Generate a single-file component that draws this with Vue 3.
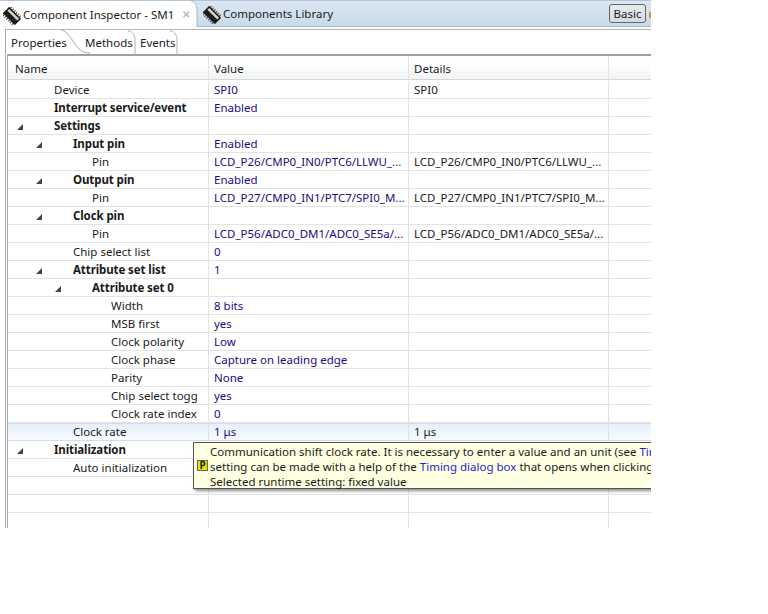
<script setup>
const rows = [
  { name: 'Device', level: 0, value: 'SPI0', details: 'SPI0' },
  { name: 'Interrupt service/event', level: 0, bold: true, value: 'Enabled' },
  { name: 'Settings', level: 0, bold: true, open: true },
  { name: 'Input pin', level: 1, bold: true, open: true, value: 'Enabled' },
  { name: 'Pin', level: 2, value: 'LCD_P26/CMP0_IN0/PTC6/LLWU_...', details: 'LCD_P26/CMP0_IN0/PTC6/LLWU_...' },
  { name: 'Output pin', level: 1, bold: true, open: true, value: 'Enabled' },
  { name: 'Pin', level: 2, value: 'LCD_P27/CMP0_IN1/PTC7/SPI0_M...', details: 'LCD_P27/CMP0_IN1/PTC7/SPI0_M...' },
  { name: 'Clock pin', level: 1, bold: true, open: true },
  { name: 'Pin', level: 2, value: 'LCD_P56/ADC0_DM1/ADC0_SE5a/...', details: 'LCD_P56/ADC0_DM1/ADC0_SE5a/...' },
  { name: 'Chip select list', level: 1, value: '0' },
  { name: 'Attribute set list', level: 1, bold: true, open: true, value: '1' },
  { name: 'Attribute set 0', level: 2, bold: true, open: true },
  { name: 'Width', level: 3, value: '8 bits' },
  { name: 'MSB first', level: 3, value: 'yes' },
  { name: 'Clock polarity', level: 3, value: 'Low' },
  { name: 'Clock phase', level: 3, value: 'Capture on leading edge' },
  { name: 'Parity', level: 3, value: 'None' },
  { name: 'Chip select toggling', level: 3, value: 'yes' },
  { name: 'Clock rate index', level: 3, value: '0' },
  { name: 'Clock rate', level: 1, value: '1 μs', details: '1 μs', selected: true },
  { name: 'Initialization', level: 0, bold: true, open: true },
  { name: 'Auto initialization', level: 1 },
  { name: '', level: 0 },
  { name: '', level: 0 },
  { name: '', level: 0 }
]
</script>

<template>
  <div class="page">
    <div class="window">
      <div class="viewbar">
        <div class="view-tab active">
          <svg class="chip" viewBox="0 0 18 18" width="18" height="18">
            <g transform="rotate(45 9 9)">
              <path d="M2.500 2.500v13M5 2.500v13M7.500 2.500v13M10 2.500v13M12.500 2.500v13M15 2.500v13" stroke="#555" stroke-width="1.200" fill="none" />
              <rect x="0.500" y="4.500" width="17" height="9" fill="#1c1c1c" />
              <rect x="2" y="6" width="14" height="2.500" fill="#d8d8c8" />
            </g>
          </svg>
          <span class="view-label">Component Inspector - SM1</span>
          <svg class="close" viewBox="0 0 11 11" width="11" height="11">
            <path d="M2 1l3.500 3.500L9 1l1 1-3.500 3.500L10 9l-1 1-3.500-3.500L2 10 1 9l3.500-3.500L1 2z" fill="#fff" stroke="#777" stroke-width="1" />
          </svg>
          <svg class="tab-curve" viewBox="0 0 8 26" width="8" height="26">
            <path d="M0 0h1c3 0 5 3 6 7v19H0z" fill="#fff" />
            <path d="M1 0c3 0 5 3 6 7v19" fill="none" stroke="#a9b8c8" />
          </svg>
        </div>
        <div class="view-tab">
          <svg class="chip" viewBox="0 0 18 18" width="18" height="18">
            <g transform="rotate(45 9 9)">
              <path d="M2.500 2.500v13M5 2.500v13M7.500 2.500v13M10 2.500v13M12.500 2.500v13M15 2.500v13" stroke="#555" stroke-width="1.200" fill="none" />
              <rect x="0.500" y="4.500" width="17" height="9" fill="#1c1c1c" />
              <rect x="2" y="6" width="14" height="2.500" fill="#d8d8c8" />
            </g>
          </svg>
          <span class="view-label">Components Library</span>
        </div>
        <div class="spacer"></div>
        <div class="basic">Basic</div>
        <div class="more"></div>
      </div>

      <div class="frame">
        <div class="subtabs">
          <div class="subtab first">
            <svg class="sub-curve" viewBox="0 0 33 25" width="33" height="25">
              <path d="M0 0c9 0 13 8 18 15 4 6 8 9 15 9v1H0z" fill="#fff" />
              <path d="M0 0c9 0 13 8 18 15 4 6 8 9 15 9" fill="none" stroke="#a8a8a8" />
            </svg>
            <span class="sub-label">Properties</span>
          </div>
          <div class="subtab second">
            <span class="sub-label">Methods</span>
            <svg class="corner" viewBox="0 0 8 25" width="8" height="25">
              <path d="M0 1c4 0 6 3 7 7v17" fill="none" stroke="#b0b0b0" />
            </svg>
          </div>
          <div class="subtab third">
            <span class="sub-label">Events</span>
            <svg class="corner" viewBox="0 0 8 25" width="8" height="25">
              <path d="M0 1c4 0 6 3 7 7v17" fill="none" stroke="#b0b0b0" />
            </svg>
          </div>
        </div>

        <div class="table">
          <div class="row head">
            <div class="cell name-head">Name</div>
            <div class="cell value-head">Value</div>
            <div class="cell details-head">Details</div>
            <div class="cell rest"></div>
          </div>
          <div v-for="(row, i) in rows" :key="i" class="row" :class="{ selected: row.selected }">
            <div class="cell name" :class="{ bold: row.bold }" :style="{ paddingLeft: 46 + row.level * 19 + 'px' }">
              <span v-if="row.open" class="arrow" :style="{ left: 9 + row.level * 19 + 'px' }"></span>
              <span class="clip">{{ row.name }}</span>
            </div>
            <div class="cell value">{{ row.value }}</div>
            <div class="cell details">{{ row.details }}</div>
            <div class="cell rest"></div>
          </div>
        </div>

        <div class="tooltip">
          <span class="pin-icon">P</span>
          <div class="tip-line">Communication shift clock rate. It is necessary to enter a value and an unit (see <span class="link">Timing dialog box</span>). The</div>
          <div class="tip-line">setting can be made with a help of the <span class="link">Timing dialog box</span> that opens when clicking on the button.</div>
          <div class="tip-line">Selected runtime setting: fixed value</div>
        </div>
      </div>
    </div>
  </div>
</template>

<style scoped>
.page {
  width: 768px;
  height: 614px;
  background: #fff;
  overflow: hidden;
  font-family: "Noto Sans", "Open Sans", "DejaVu Sans", sans-serif;
  font-size: 11.5px;
  color: #1a1a1a;
}
.window {
  width: 651px;
  height: 528px;
  overflow: hidden;
  display: flex;
  flex-direction: column;
}
.viewbar {
  height: 27px;
  box-sizing: border-box;
  display: flex;
  align-items: center;
  background: linear-gradient(#dbe7f2, #c8dbeb);
  border-top: 1px solid #b4c4d6;
  border-bottom: 1px solid #a9b8c8;
  flex: none;
}
.view-tab {
  position: relative;
  height: 25px;
  display: flex;
  align-items: center;
  padding-left: 3px;
}
.view-tab.active {
  width: 190px;
  box-sizing: border-box;
  background: #fff;
  margin-right: 9px;
  height: 26px;
  margin-bottom: -1px;
}
.view-tab + .view-tab {
  padding-left: 4px;
}
.chip {
  flex: none;
  margin-top: 3px;
}
.view-label {
  margin-left: 2px;
  white-space: nowrap;
}
.close {
  margin-left: 9px;
}
.tab-curve {
  position: absolute;
  left: 190px;
  top: 0;
}
.spacer {
  flex: 1;
}
.basic {
  width: 37px;
  height: 19px;
  box-sizing: border-box;
  border: 1px solid #666;
  border-radius: 3px;
  background: linear-gradient(#e6ebf0, #d4dce4);
  text-align: center;
  line-height: 17px;
}
.more {
  width: 2px;
  height: 6px;
  margin: 3px 0 0 3px;
  background: #c99a3a;
}
.frame {
  position: relative;
  flex: 1;
  margin-top: 2px;
  margin-left: 5px;
  border-left: 1px solid #a8a8a8;
  border-top: 1px solid #b4b4b4;
  min-height: 0;
}
.subtabs {
  height: 24px;
  display: flex;
  box-sizing: border-box;
}
.subtab {
  position: relative;
  line-height: 26px;
  box-sizing: border-box;
}
.sub-label {
  position: relative;
}
.subtab.first {
  width: 79px;
  padding-left: 5px;
}
.sub-curve {
  position: absolute;
  left: 51px;
  top: -1px;
}
.subtab.second {
  width: 51px;
}
.subtab.third {
  width: 42px;
  padding-left: 4px;
}
.corner {
  position: absolute;
  right: 0;
  top: 0;
}
.table {
  margin-left: 1px;
  border-left: 1px solid #a8a8a8;
  border-top: 2px solid #a0a0a0;
}
.row {
  display: flex;
  height: 18px;
  box-sizing: border-box;
  border-bottom: 1px solid #e3e3e3;
  line-height: 17px;
  white-space: nowrap;
}
.row.head {
  height: 24px;
  margin-bottom: 1px;
  line-height: 25px;
  background: linear-gradient(#fff 30%, #f2f3f4);
  border-bottom: 1px solid #d6d6d6;
}
.row.selected {
  background: linear-gradient(#e6eff9, #f8fbfe);
  border-top: 1px solid #cfdfef;
  border-bottom: 1px solid #cfdfef;
  line-height: 16px;
}
.cell {
  position: relative;
  box-sizing: border-box;
  border-right: 1px solid #e3e3e3;
  flex: none;
}
.name,
.name-head {
  width: 201px;
}
.name-head {
  padding-left: 7px;
}
.value,
.value-head,
.details,
.details-head {
  width: 200px;
  padding-left: 5px;
  overflow: hidden;
}
.value {
  color: #1d0a80;
}
.rest {
  flex: 1;
  border-right: 0;
}
.name {
  padding-right: 11px;
}
.clip {
  display: block;
  overflow: hidden;
}
.bold {
  font-weight: 700;
  letter-spacing: -0.1px;
}
.arrow {
  position: absolute;
  top: 7px;
  width: 0;
  height: 0;
  border-left: 6px solid transparent;
  border-bottom: 6px solid #444;
}
.tooltip {
  position: absolute;
  left: 187px;
  top: 412px;
  width: 620px;
  height: 47px;
  box-sizing: border-box;
  padding: 1px 0 0 16px;
  background: #ffffe1;
  border: 1px solid #555;
  box-shadow: 2px 2px 3px rgba(0, 0, 0, 0.45);
  line-height: 15px;
  white-space: nowrap;
}
.link {
  color: #2222dd;
}
.pin-icon {
  position: absolute;
  left: 3px;
  top: 17px;
  width: 11px;
  height: 11px;
  box-sizing: border-box;
  border: 1px solid #666;
  background: #e6e600;
  font-size: 10px;
  font-weight: 700;
  line-height: 9px;
  text-align: center;
  color: #222;
}
</style>
